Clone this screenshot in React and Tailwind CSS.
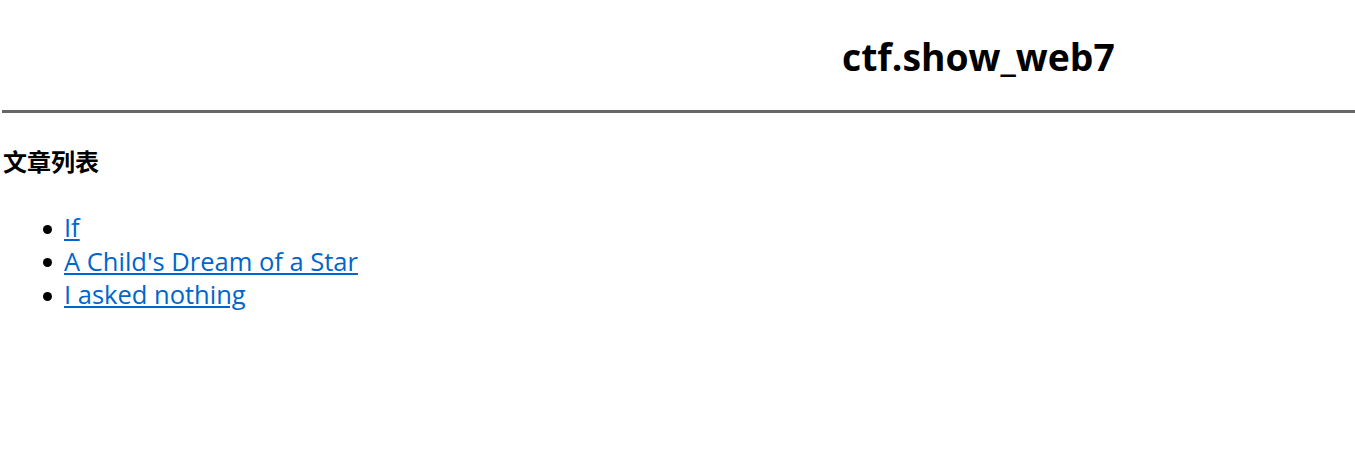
import React from 'react';

const posts = [
  { id: 1, title: 'If' },
  { id: 2, title: "A Child's Dream of a Star" },
  { id: 3, title: 'I asked nothing' },
];

export default function App() {
  return (
    <div
      className="min-h-[458px] bg-white text-black"
      style={{ fontFamily: '"Open Sans", "Noto Sans CJK SC", sans-serif' }}
    >
      <div className="pl-[842px] pt-[32px] pb-[28px]">
        <h1 className="text-[37.3px] font-bold leading-[50px]">ctf.show_web7</h1>
      </div>
      <hr className="ml-[2px] border-0 border-t-[3px] border-[#666]" />
      <div className="px-[3px]">
        <h3 className="mt-[34px] text-[24px] font-bold leading-[30px]">文章列表</h3>
        <ul className="mt-[34px] pl-[40px] text-[25.5px] leading-[33.5px]">
          {posts.map((post) => (
            <li key={post.id} className="flex items-center">
              <span className="mt-[3px] mr-[12px] h-[9px] w-[9px] rounded-full bg-black" />
              <a href="#" className="text-[#0066cc] underline">
                {post.title}
              </a>
            </li>
          ))}
        </ul>
      </div>
    </div>
  );
}
